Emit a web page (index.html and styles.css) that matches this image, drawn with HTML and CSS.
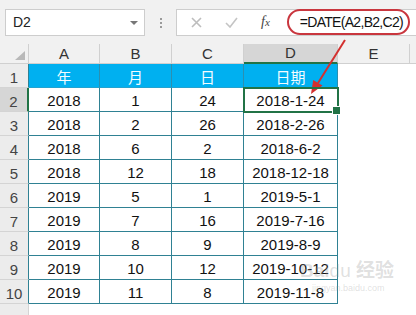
FILE: index.html
```html
<!DOCTYPE html>
<html lang="zh">
<head>
  <meta charset="UTF-8">
  <title>DATE</title>
  <link rel="stylesheet" href="styles.css">
</head>
<body>
  <div id="root">
    <!-- 编辑栏 -->
    <div class="toolbar">
      <div class="namebox"><span>D2</span><span class="drop"></span></div>
      <div class="grip"></div>
      <div class="formula">
        <svg class="ico cancel" width="11" height="11" viewBox="0 0 11 11"><path d="M1 1L10 10M10 1L1 10" stroke="#bdbdbd" stroke-width="1.6"/></svg>
        <svg class="ico enter" width="13" height="11" viewBox="0 0 13 11"><path d="M1 6L5 10L12 1" stroke="#c4c4c4" stroke-width="1.6" fill="none"/></svg>
        <span class="fx">f<i>x</i></span>
        <span class="oval">=DATE(A2,B2,C2)</span>
      </div>
    </div>

    <!-- 表格 -->
    <div class="sheet">
      <div class="corner"></div>
      <div class="colhead">A</div>
      <div class="colhead">B</div>
      <div class="colhead">C</div>
      <div class="colhead active">D</div>
      <div class="colhead">E</div>
      <div class="colrest"></div>

      <div class="rowhead">1</div>
      <div class="cell title">年</div>
      <div class="cell title">月</div>
      <div class="cell title">日</div>
      <div class="cell title">日期</div>
      <div class="blank"></div>

      <div class="rowhead active">2</div>
      <div class="cell">2018</div><div class="cell">1</div><div class="cell">24</div>
      <div class="cell sel">2018-1-24</div><div class="blank"></div>

      <div class="rowhead">3</div>
      <div class="cell">2018</div><div class="cell">2</div><div class="cell">26</div>
      <div class="cell">2018-2-26</div><div class="blank"></div>

      <div class="rowhead">4</div>
      <div class="cell">2018</div><div class="cell">6</div><div class="cell">2</div>
      <div class="cell">2018-6-2</div><div class="blank"></div>

      <div class="rowhead">5</div>
      <div class="cell">2018</div><div class="cell">12</div><div class="cell">18</div>
      <div class="cell">2018-12-18</div><div class="blank"></div>

      <div class="rowhead">6</div>
      <div class="cell">2019</div><div class="cell">5</div><div class="cell">1</div>
      <div class="cell">2019-5-1</div><div class="blank"></div>

      <div class="rowhead">7</div>
      <div class="cell">2019</div><div class="cell">7</div><div class="cell">16</div>
      <div class="cell">2019-7-16</div><div class="blank"></div>

      <div class="rowhead">8</div>
      <div class="cell">2019</div><div class="cell">8</div><div class="cell">9</div>
      <div class="cell">2019-8-9</div><div class="blank"></div>

      <div class="rowhead">9</div>
      <div class="cell">2019</div><div class="cell">10</div><div class="cell">12</div>
      <div class="cell">2019-10-12</div><div class="blank"></div>

      <div class="rowhead">10</div>
      <div class="cell">2019</div><div class="cell">11</div><div class="cell">8</div>
      <div class="cell">2019-11-8</div><div class="blank"></div>

      <div class="rowhead last"></div>
      <div class="blank wide"></div>
    </div>

    <!-- 红色箭头 -->
    <svg class="arrow" width="60" height="70" viewBox="0 0 60 70">
      <line x1="45" y1="6" x2="18" y2="49" stroke="#d3302f" stroke-width="2"/>
      <polygon points="11,60 22.5,51.5 13.2,46" fill="#d3302f"/>
    </svg>

    <div class="watermark">
      <div class="wm-big">Bai<span>du</span> 经验</div>
      <div class="wm-small">jingyan.baidu.com</div>
    </div>
  </div>
</body>
</html>
```

FILE: styles.css
```css
* {margin:0; padding:0; box-sizing: border-box;}
body{
  width: 416px;
  height: 315px;
  overflow: hidden;
  background-color: #fff;
  font-family: "Liberation Sans", "Noto Sans CJK SC", sans-serif;
}
#root{
  position: relative;
  width: 416px;
  height: 315px;
}

/* toolbar */
.toolbar{
  height: 44px;
  background-color: #f1f1f1;
  display: flex;
  align-items: center;
  padding: 0 0 0 5px;
}
.namebox{
  width: 140px;
  height: 27px;
  background-color: #fff;
  border: 1px solid #cdcdcd;
  display: flex;
  align-items: center;
  justify-content: space-between;
  padding: 0 6px 0 7px;
  font-size: 14px;
  color: #222;
}
.drop{
  width: 0;
  height: 0;
  border-left: 4px solid transparent;
  border-right: 4px solid transparent;
  border-top: 4px solid #777;
  margin-top: 1px;
}
.grip{
  width: 2px;
  height: 11px;
  margin: 0 14px 0 15px;
  background-image: radial-gradient(circle, #9a9a9a 0.9px, transparent 1.1px);
  background-size: 2px 4px;
}
.formula{
  flex: 1;
  height: 27px;
  margin-right: -4px;
  background-color: #fff;
  border: 1px solid #cdcdcd;
  display: flex;
  align-items: center;
}
.cancel{ margin-left: 14px; }
.enter{ margin-left: 23px; }
.fx{
  margin-left: 23px;
  font-family: "Liberation Serif", serif;
  font-style: italic;
  font-size: 14px;
  color: #444;
}
.fx i{ font-size: 11px; }
.oval{
  margin-left: 17px;
  width: 123px;
  height: 26px;
  border: 2px solid #c9363e;
  border-radius: 13px;
  display: flex;
  align-items: center;
  padding-left: 11px;
  font-size: 14px;
  letter-spacing: -0.7px;
  color: #111;
  white-space: nowrap;
}

/* sheet */
.sheet{
  display: grid;
  grid-template-columns: 29px 71px 72px 72px 94px 72px 1fr;
  grid-template-rows: 20px repeat(10, 24px) 11px;
  font-size: 15px;
  color: #111;
}
.corner, .colhead, .colrest{
  background-color: #f1f1f1;
  border-bottom: 1px solid #d0d0d0;
}
.corner{
  position: relative;
  border-right: 1px solid #d0d0d0;
}
.corner::after{
  content: '';
  position: absolute;
  right: 3px;
  bottom: 3px;
  border-left: 10px solid transparent;
  border-bottom: 9px solid #b9b9b9;
}
.colhead{
  border-right: 1px solid #d0d0d0;
  display: flex;
  justify-content: center;
  align-items: flex-end;
  padding-bottom: 1px;
  color: #333;
}
.colhead.active{
  background-color: #d6d6d6;
  border-bottom: 2px solid #217346;
}
.rowhead{
  background-color: #ececec;
  border-right: 1px solid #2f8193;
  border-bottom: 1px solid #d4d4d4;
  display: flex;
  justify-content: center;
  align-items: flex-end;
  padding-bottom: 1px;
  color: #444;
}
.rowhead.active{
  background-color: #d6d6d6;
  border-right: 2px solid #217346;
}
.rowhead.last{
  border-right: 1px solid #d4d4d4;
  border-bottom: none;
}
.cell{
  border-right: 1px solid #2f8193;
  border-bottom: 1px solid #2f8193;
  display: flex;
  justify-content: center;
  align-items: center;
  padding-top: 1px;
  white-space: nowrap;
}
.cell.title{
  background-color: #00b0f0;
  color: #f4fcff;
  font-family: "Noto Sans CJK SC", sans-serif;
  font-size: 15px;
  border-bottom-color: #23a3d0;
  border-right-color: #2b8fb0;
}
.cell.sel{
  position: relative;
  z-index: 1;
  outline: 2px solid #217346;
  outline-offset: -1px;
}
.cell.sel::after{
  content: '';
  position: absolute;
  right: -4px;
  bottom: -4px;
  width: 7px;
  height: 7px;
  background-color: #217346;
  border: 1px solid #fff;
}
.blank{ grid-column: span 2; }
.blank.wide{ grid-column: span 6; }

/* annotation */
.arrow{
  position: absolute;
  left: 300px;
  top: 34px;
}
.watermark{
  position: absolute;
  left: 300px;
  top: 260px;
  color: rgba(150, 150, 150, 0.3);
  white-space: nowrap;
}
.wm-big{
  font-size: 19px;
  line-height: 22px;
  font-weight: bold;
}
.wm-big span{ font-weight: normal; }
.wm-small{
  font-size: 9px;
  line-height: 12px;
  margin-left: 12px;
}
```
